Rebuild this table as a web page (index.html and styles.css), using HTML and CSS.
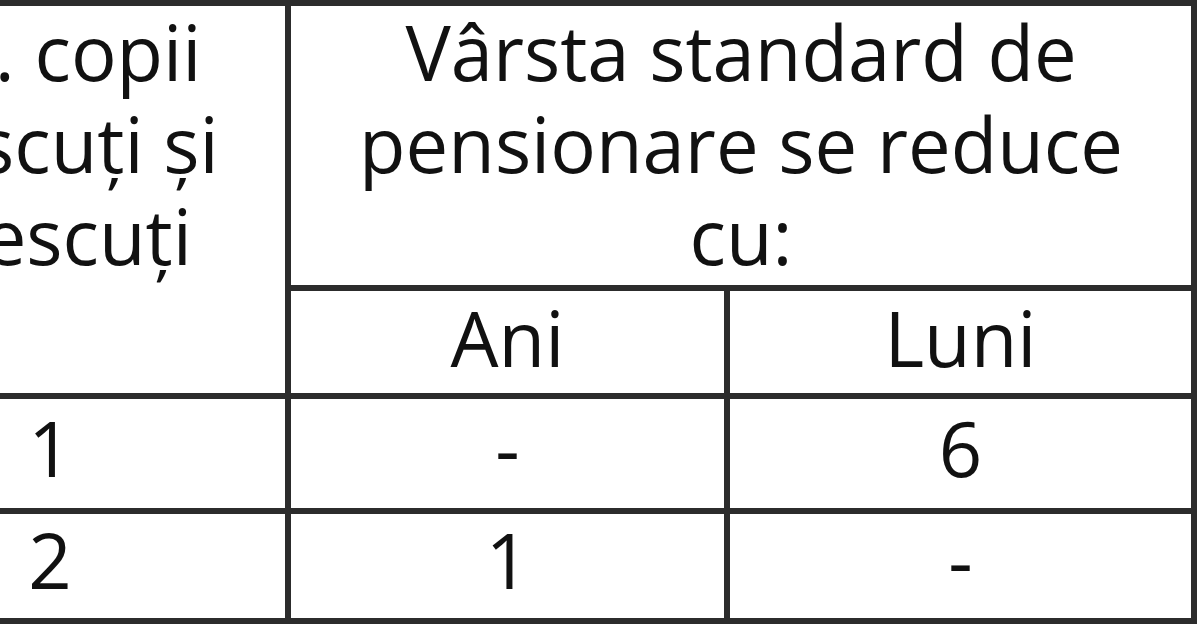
FILE: index.html
```html
<!DOCTYPE html>
<html lang="ro">
<head>
<meta charset="utf-8">
<title>Vârsta standard de pensionare</title>
<link rel="stylesheet" href="styles.css">
</head>
<body>
<div class="table">
  <div class="cell head-left">Nr. copii<br>născuți și<br>crescuți</div>
  <div class="cell head-right">Vârsta standard de<br>pensionare se reduce<br>cu:</div>
  <div class="cell sub">Ani</div>
  <div class="cell sub">Luni</div>
  <div class="cell row">1</div>
  <div class="cell row">-</div>
  <div class="cell row">6</div>
  <div class="cell row">2</div>
  <div class="cell row">1</div>
  <div class="cell row">-</div>
</div>
</body>
</html>
```

FILE: styles.css
```css
html, body {
  margin: 0;
  padding: 0;
  background: #ffffff;
  overflow: hidden;
}

body {
  width: 1200px;
  height: 627px;
  font-family: "Open Sans", "Noto Sans", sans-serif;
  font-weight: 500;
  color: #111111;
}

.table {
  display: grid;
  grid-template-columns: 470px 433px 461px;
  grid-template-rows: 279px 102px 109px 104px;
  gap: 6px;
  padding: 6px;
  width: max-content;
  margin-left: -191px;
  background: #2c2c2c;
}

.cell {
  background: #ffffff;
  display: flex;
  align-items: center;
  justify-content: center;
  text-align: center;
  font-size: 76px;
  line-height: 92px;
}

.head-left {
  grid-row: 1 / span 2;
  align-items: flex-start;
  padding-left: 8px;
}

.head-right {
  grid-column: 2 / span 2;
  align-items: flex-start;
}

.sub {
  padding-bottom: 8px;
}

.row {
  padding-bottom: 12px;
}
```
